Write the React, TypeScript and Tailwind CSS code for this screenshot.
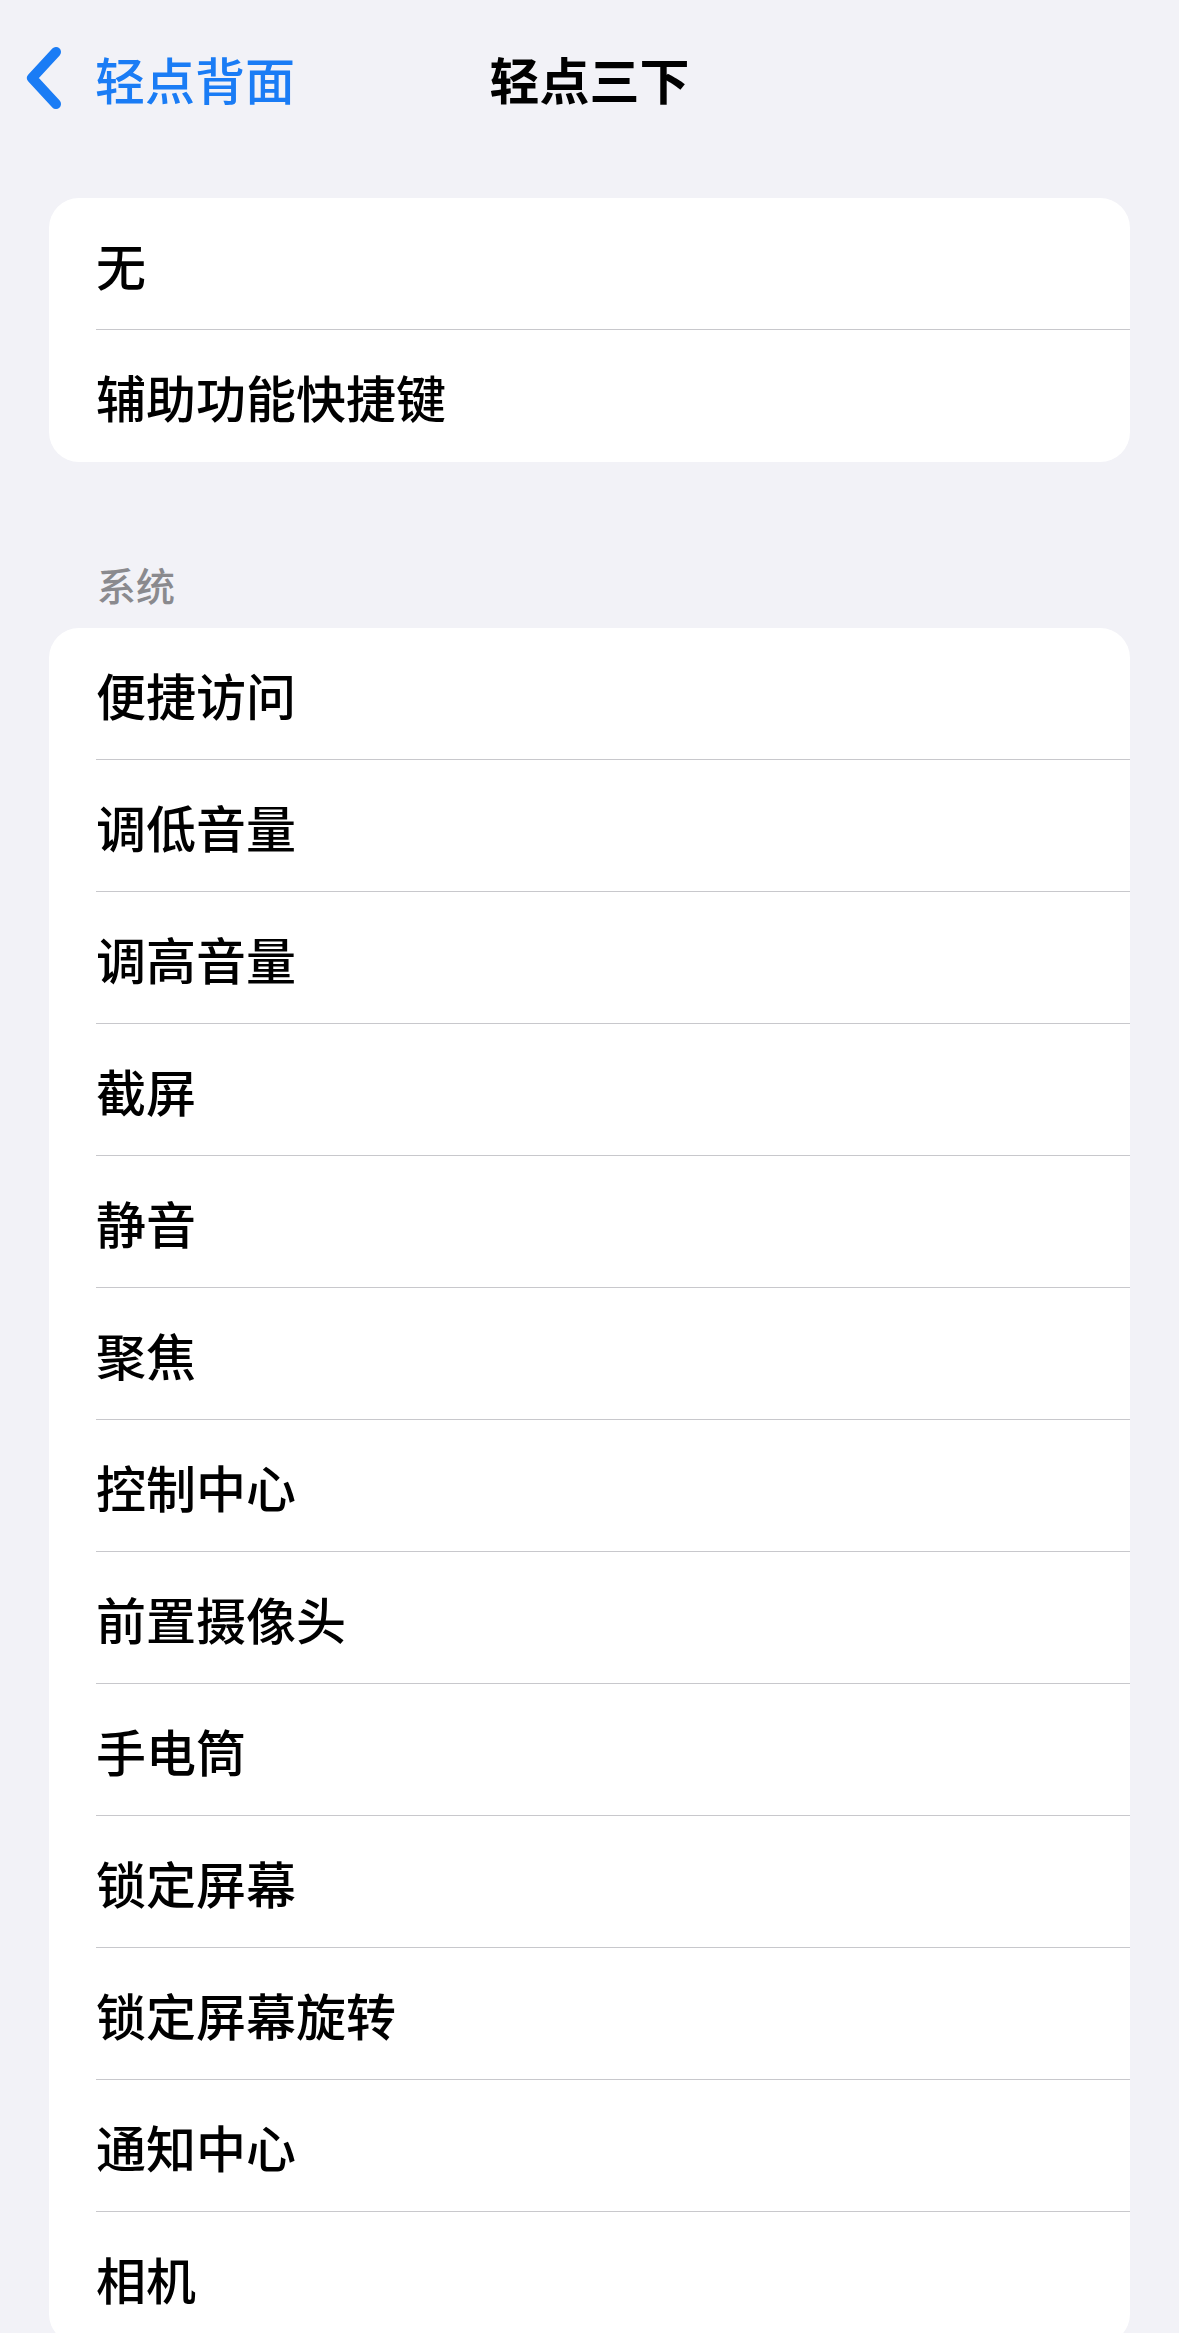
const shortcuts = ['无', '辅助功能快捷键'];

const systemActions = [
  '便捷访问',
  '调低音量',
  '调高音量',
  '截屏',
  '静音',
  '聚焦',
  '控制中心',
  '前置摄像头',
  '手电筒',
  '锁定屏幕',
  '锁定屏幕旋转',
  '通知中心',
  '相机',
];

function BackChevron() {
  return (
    <svg width="40" height="62" viewBox="0 0 40 62" fill="none" aria-hidden="true">
      <path
        d="M32 5 L8 31 L32 57"
        stroke="#1a7cf5"
        strokeWidth="10"
        strokeLinecap="round"
        strokeLinejoin="round"
      />
    </svg>
  );
}

function Group({ items }: { items: string[] }) {
  return (
    <div className="rounded-[30px] bg-white overflow-hidden">
      {items.map((label, i) => (
        <div key={label} className="pl-[47px]">
          <div
            className={`h-[132px] flex items-center text-[50px] leading-none font-medium text-black ${
              i < items.length - 1 ? 'border-b border-[#c8c8cc]' : ''
            }`}
          >
            {label}
          </div>
        </div>
      ))}
    </div>
  );
}

export default function App() {
  return (
    <div className="h-[2333px] overflow-hidden bg-[#f2f2f7] font-['Noto_Sans_CJK_SC',sans-serif]">
      <header className="h-[156px] grid grid-cols-[1fr_auto_1fr] items-center">
        <button className="flex items-center pl-[24px] text-[#1a7cf5]">
          <BackChevron />
          <span className="ml-[31px] text-[50px] leading-none font-medium">轻点背面</span>
        </button>
        <h1 className="text-[50px] leading-none font-bold text-black">轻点三下</h1>
        <div />
      </header>

      <main className="px-[49px] pt-[42px]">
        <Group items={shortcuts} />

        <div className="mt-[103px] mb-[24px] pl-[48px] text-[39px] leading-[39px] font-medium text-[#8a8a8e]">
          系统
        </div>
        <Group items={systemActions} />
      </main>
    </div>
  );
}
